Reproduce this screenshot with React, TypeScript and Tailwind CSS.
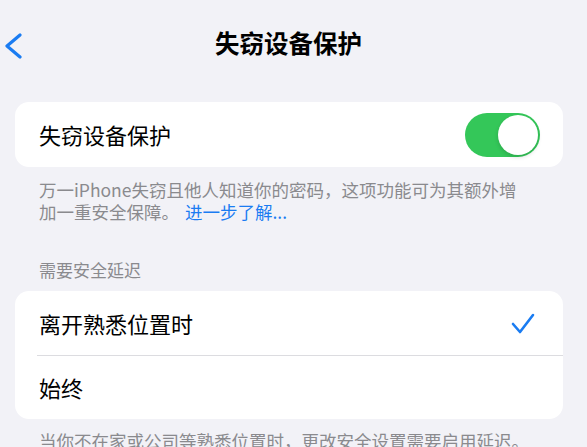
import React from "react";

const font = { fontFamily: '"Noto Sans CJK SC", "Noto Sans", sans-serif' };

function Toggle() {
  return (
    <div className="w-[75px] h-[44px] rounded-full bg-[#34c759] p-[2px] flex justify-end">
      <div className="w-[40px] h-[40px] rounded-full bg-white shadow-[0_2px_4px_rgba(0,0,0,0.15)]"></div>
    </div>
  );
}

export default function App() {
  return (
    <div
      className="w-[587px] h-[447px] overflow-hidden bg-[#f2f2f7] text-black"
      style={font}
    >
      <div className="relative h-[86px] flex items-center justify-center pr-[10px]">
        <svg
          className="absolute left-[3px] top-[33px]"
          width="20"
          height="26"
          viewBox="0 0 20 26"
          fill="none"
          stroke="#1a7cf2"
          strokeWidth="3.2"
          strokeLinecap="round"
          strokeLinejoin="round"
        >
          <path d="M17 2 L4 13 L17 24" />
        </svg>
        <h1 className="text-[24.5px] leading-[30px] font-semibold">失窃设备保护</h1>
      </div>

      <div className="mt-[16px] ml-[15px] mr-[24px] h-[65px] bg-white rounded-[14px] flex items-center justify-between pl-[24px] pr-[23px]">
        <span className="text-[22px]">失窃设备保护</span>
        <Toggle />
      </div>

      <p className="mt-[12px] ml-[39px] text-[17.5px] leading-[22px] text-[#8a8a8e] whitespace-nowrap">
        万一iPhone失窃且他人知道你的密码，这项功能可为其额外增
        <br />
        加一重安全保障。
        <span className="text-[#1a7cf2] ml-[6px]">进一步了解...</span>
      </p>

      <div className="mt-[36px] ml-[39px] text-[17px] leading-[22px] text-[#8a8a8e]">
        需要安全延迟
      </div>

      <div className="mt-[10px] ml-[15px] mr-[24px] bg-white rounded-[14px] flex flex-col">
        <div className="h-[64px] flex items-center justify-between pl-[24px] pr-[28px]">
          <span className="text-[22px]">离开熟悉位置时</span>
          <svg
            width="24"
            height="21"
            viewBox="0 0 24 21"
            fill="none"
            stroke="#1a7cf2"
            strokeWidth="2.6"
            strokeLinecap="round"
            strokeLinejoin="round"
          >
            <path d="M2 11 L9 19 L22 2" />
          </svg>
        </div>
        <div className="ml-[22px] h-px bg-[#dcdce0]"></div>
        <div className="h-[63px] flex items-center pl-[24px]">
          <span className="text-[22px]">始终</span>
        </div>
      </div>

      <p className="mt-[11px] ml-[39px] text-[17.5px] leading-[22px] text-[#8a8a8e] whitespace-nowrap">
        当你不在家或公司等熟悉位置时，更改安全设置需要启用延迟。
      </p>
    </div>
  );
}
